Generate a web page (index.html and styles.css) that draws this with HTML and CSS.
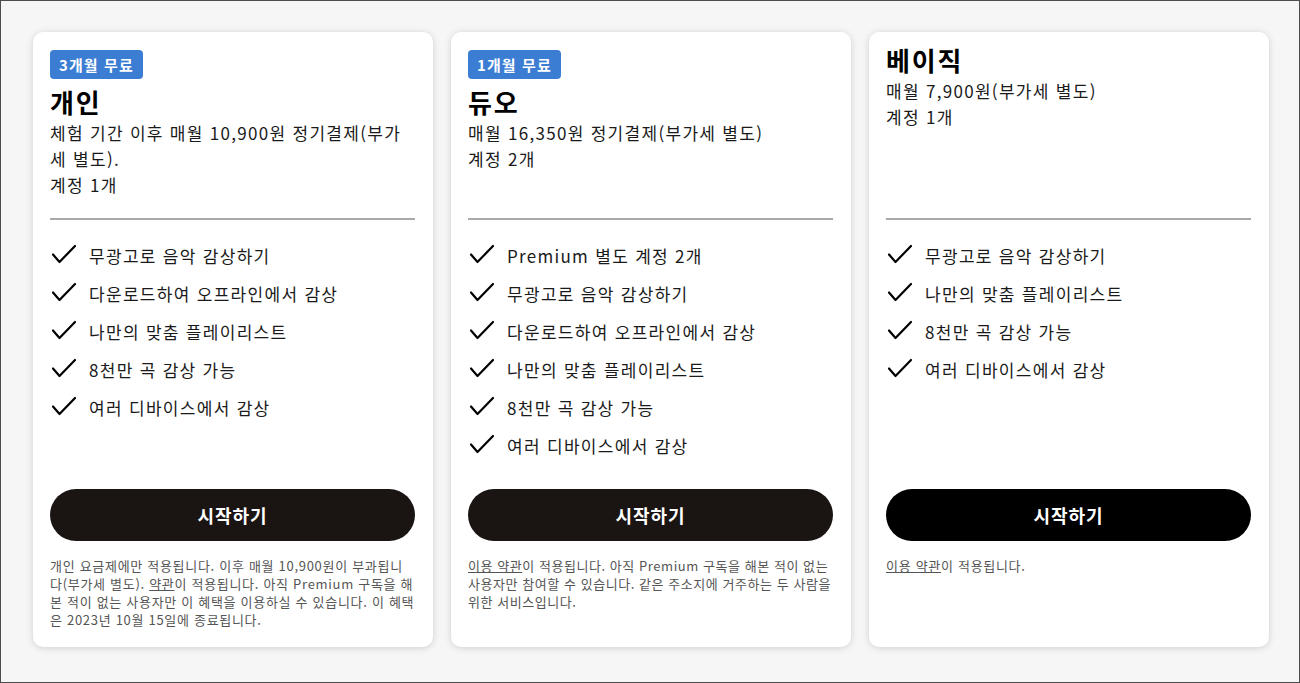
FILE: index.html
```html
<!DOCTYPE html>
<html lang="ko">
<head>
<meta charset="utf-8">
<title>Premium 요금제</title>
<link rel="stylesheet" href="styles.css">
</head>
<body>
<main class="plans">
  <section class="card">
    <header class="head">
      <span class="badge">3개월 무료</span>
      <h2 class="title">개인</h2>
      <p class="desc">체험 기간 이후 매월 10,900원 정기결제(부가세 별도).</p>
      <p class="desc">계정 1개</p>
    </header>
    <hr class="rule">
    <ul class="features">
      <li><svg class="check" viewBox="0 0 24 24"><polyline points="1,11.5 7.5,19 23,3"/></svg><span>무광고로 음악 감상하기</span></li>
      <li><svg class="check" viewBox="0 0 24 24"><polyline points="1,11.5 7.5,19 23,3"/></svg><span>다운로드하여 오프라인에서 감상</span></li>
      <li><svg class="check" viewBox="0 0 24 24"><polyline points="1,11.5 7.5,19 23,3"/></svg><span>나만의 맞춤 플레이리스트</span></li>
      <li><svg class="check" viewBox="0 0 24 24"><polyline points="1,11.5 7.5,19 23,3"/></svg><span>8천만 곡 감상 가능</span></li>
      <li><svg class="check" viewBox="0 0 24 24"><polyline points="1,11.5 7.5,19 23,3"/></svg><span>여러 디바이스에서 감상</span></li>
    </ul>
    <div class="foot">
      <button class="cta">시작하기</button>
      <p class="fine">개인 요금제에만 적용됩니다. 이후 매월 10,900원이 부과됩니다(부가세 별도). <a href="#">약관</a>이 적용됩니다. 아직 Premium 구독을 해본 적이 없는 사용자만 이 혜택을 이용하실 수 있습니다. 이 혜택은 2023년 10월 15일에 종료됩니다.</p>
    </div>
  </section>

  <section class="card">
    <header class="head">
      <span class="badge">1개월 무료</span>
      <h2 class="title">듀오</h2>
      <p class="desc">매월 16,350원 정기결제(부가세 별도)</p>
      <p class="desc">계정 2개</p>
    </header>
    <hr class="rule">
    <ul class="features">
      <li><svg class="check" viewBox="0 0 24 24"><polyline points="1,11.5 7.5,19 23,3"/></svg><span>Premium 별도 계정 2개</span></li>
      <li><svg class="check" viewBox="0 0 24 24"><polyline points="1,11.5 7.5,19 23,3"/></svg><span>무광고로 음악 감상하기</span></li>
      <li><svg class="check" viewBox="0 0 24 24"><polyline points="1,11.5 7.5,19 23,3"/></svg><span>다운로드하여 오프라인에서 감상</span></li>
      <li><svg class="check" viewBox="0 0 24 24"><polyline points="1,11.5 7.5,19 23,3"/></svg><span>나만의 맞춤 플레이리스트</span></li>
      <li><svg class="check" viewBox="0 0 24 24"><polyline points="1,11.5 7.5,19 23,3"/></svg><span>8천만 곡 감상 가능</span></li>
      <li><svg class="check" viewBox="0 0 24 24"><polyline points="1,11.5 7.5,19 23,3"/></svg><span>여러 디바이스에서 감상</span></li>
    </ul>
    <div class="foot">
      <button class="cta">시작하기</button>
      <p class="fine fine-tight"><a href="#">이용 약관</a>이 적용됩니다. 아직 Premium 구독을 해본 적이 없는 사용자만 참여할 수 있습니다. 같은 주소지에 거주하는 두 사람을 위한 서비스입니다.</p>
    </div>
  </section>

  <section class="card">
    <header class="head head-plain">
      <h2 class="title">베이직</h2>
      <p class="desc">매월 7,900원(부가세 별도)</p>
      <p class="desc">계정 1개</p>
    </header>
    <hr class="rule">
    <ul class="features">
      <li><svg class="check" viewBox="0 0 24 24"><polyline points="1,11.5 7.5,19 23,3"/></svg><span>무광고로 음악 감상하기</span></li>
      <li><svg class="check" viewBox="0 0 24 24"><polyline points="1,11.5 7.5,19 23,3"/></svg><span>나만의 맞춤 플레이리스트</span></li>
      <li><svg class="check" viewBox="0 0 24 24"><polyline points="1,11.5 7.5,19 23,3"/></svg><span>8천만 곡 감상 가능</span></li>
      <li><svg class="check" viewBox="0 0 24 24"><polyline points="1,11.5 7.5,19 23,3"/></svg><span>여러 디바이스에서 감상</span></li>
    </ul>
    <div class="foot">
      <button class="cta cta-black">시작하기</button>
      <p class="fine"><a href="#">이용 약관</a>이 적용됩니다.</p>
    </div>
  </section>
</main>
</body>
</html>
```

FILE: styles.css
```css
* { box-sizing: border-box; }

html, body {
  margin: 0;
  padding: 0;
}

body {
  height: 683px;
  border: 1px solid #4d4d4d;
  background: #f6f6f6;
  font-family: "Noto Sans CJK KR", "Noto Sans", sans-serif;
  color: #111;
}

.plans {
  display: grid;
  grid-template-columns: repeat(3, 400px);
  column-gap: 18px;
  padding: 31px 0 0 32px;
  align-items: stretch;
}

.card {
  background: #fff;
  border-radius: 10px;
  box-shadow: 0 1px 7px rgba(0, 0, 0, 0.16);
  padding: 10px 18px 17px 17px;
  display: flex;
  flex-direction: column;
  height: 615px;
}

.head {
  height: 176px;
  display: flex;
  flex-direction: column;
  align-items: flex-start;
}

.badge {
  margin-top: 8px;
  background: #3b7dd3;
  color: #fff;
  font-weight: 700;
  font-size: 15px;
  letter-spacing: 1.1px;
  line-height: 29px;
  height: 29px;
  padding: 0 9px;
  border-radius: 4px;
  margin-bottom: 5px;
}

.title {
  margin: 0;
  font-size: 26px;
  font-weight: 700;
  letter-spacing: 1.8px;
  line-height: 36px;
  color: #000;
}

.desc {
  margin: 0;
  font-size: 17px;
  letter-spacing: 1.3px;
  line-height: 26px;
  color: #1a1a1a;
}

.rule {
  margin: 0;
  border: 0;
  height: 2px;
  background: #a9a9a9;
}

.features {
  list-style: none;
  margin: 16px 0 0;
  padding: 0;
  height: 228px;
}

.features li {
  display: flex;
  align-items: center;
  height: 38px;
  font-size: 17px;
  letter-spacing: 1.3px;
  color: #1a1a1a;
}

.check {
  width: 24px;
  height: 24px;
  margin-left: 2px;
  margin-right: 13px;
  fill: none;
  stroke: #000;
  stroke-width: 2.2;
  stroke-linecap: round;
  stroke-linejoin: round;
  flex-shrink: 0;
}

.foot {
  margin-top: 25px;
}

.cta {
  display: block;
  width: 100%;
  height: 52px;
  border: 0;
  border-radius: 26px;
  background: #1a1413;
  color: #fff;
  font-family: inherit;
  font-size: 18px;
  font-weight: 700;
  letter-spacing: 0.9px;
  cursor: pointer;
}

.cta-black { background: #000; }

.fine {
  margin: 16px 0 0;
  font-size: 13px;
  letter-spacing: 0.7px;
  line-height: 18px;
  color: #555;
}

.fine-tight {
  letter-spacing: 0.55px;
}

.fine a {
  color: #555;
  text-decoration: underline;
}
```
